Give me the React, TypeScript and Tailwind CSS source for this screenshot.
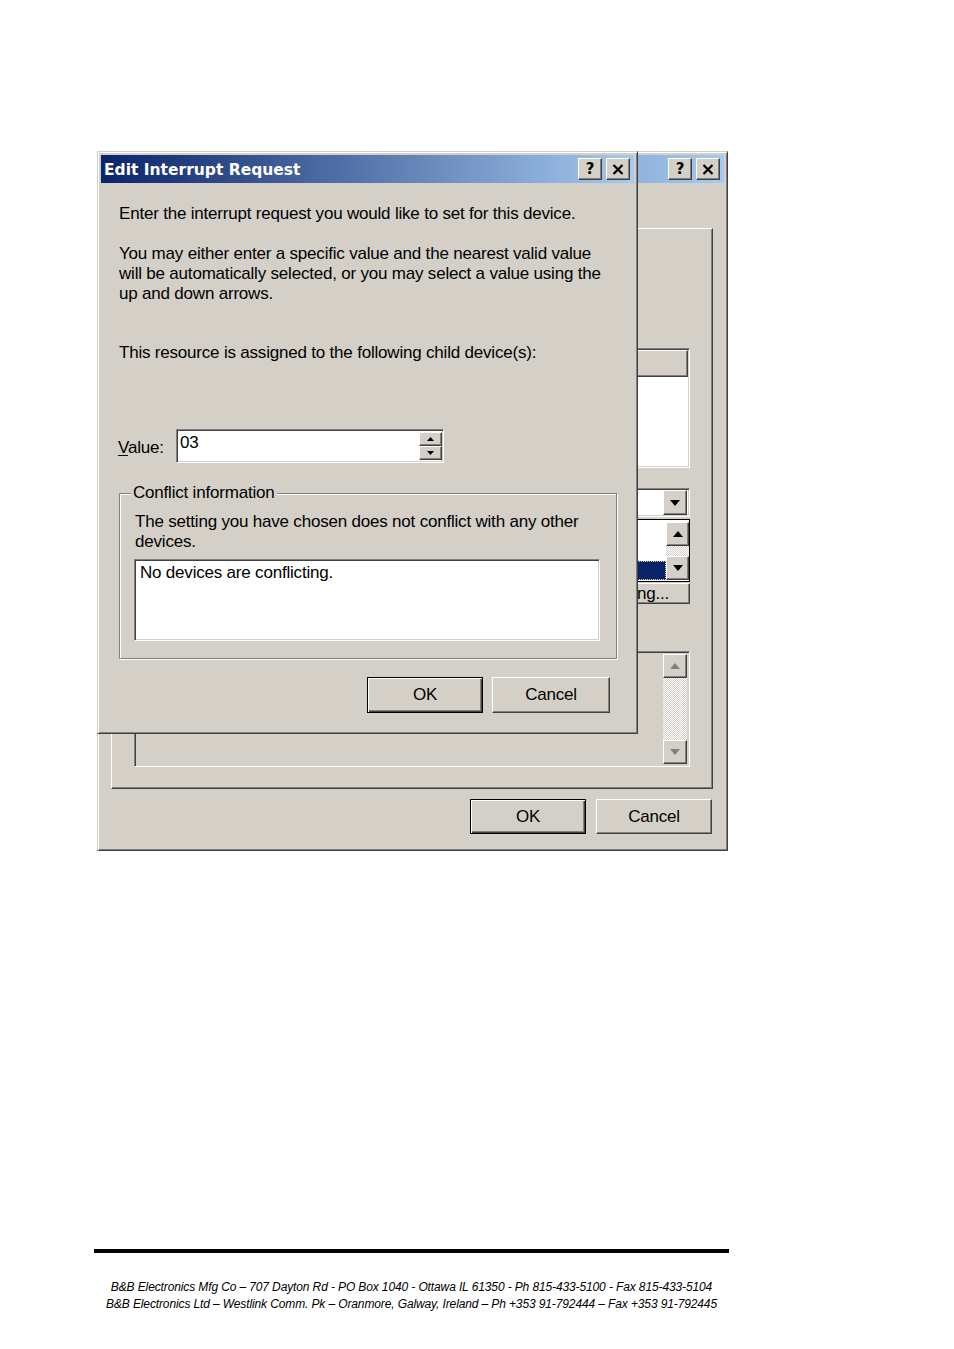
import React from 'react';

const ui = "font-['Liberation_Sans',Arial,sans-serif] tracking-[-0.2px]";
const raised =
  'bg-[#d4d0c8] border border-t-white border-l-white border-r-[#404040] border-b-[#404040] shadow-[inset_-1px_-1px_0_#808080]';
const sunken =
  'border border-t-[#808080] border-l-[#808080] border-r-white border-b-white shadow-[inset_1px_1px_0_#404040,inset_-1px_-1px_0_#d4d0c8]';
const windowBox =
  'bg-[#d4d0c8] border border-t-[#d4d0c8] border-l-[#d4d0c8] border-r-[#404040] border-b-[#404040] shadow-[inset_1px_1px_0_#fff,inset_-1px_-1px_0_#808080]';
const checker =
  'bg-[repeating-conic-gradient(#ffffff_0%_25%,#d4d0c8_0%_50%)] bg-[length:2px_2px]';

function Arrow({ dir, color = '#000', w = 10, h = 6 }: { dir: 'up' | 'down'; color?: string; w?: number; h?: number }) {
  return (
    <svg width={w} height={h} viewBox={`0 0 ${w} ${h}`}>
      {dir === 'down' ? (
        <polygon points={`0,0 ${w},0 ${w / 2},${h}`} fill={color} />
      ) : (
        <polygon points={`0,${h} ${w},${h} ${w / 2},0`} fill={color} />
      )}
    </svg>
  );
}

function TitleButtons() {
  return (
    <div className="flex gap-[4px]">
      <div className={`${raised} w-[24px] h-[22px] flex items-center justify-center`}>
        <span className="font-['DejaVu_Sans',sans-serif] font-bold text-[15px] leading-none text-black">?</span>
      </div>
      <div className={`${raised} w-[24px] h-[22px] flex items-center justify-center`}>
        <svg width="12" height="11" viewBox="0 0 12 11">
          <path d="M1.5 1 L10.5 10 M10.5 1 L1.5 10" stroke="#000" strokeWidth="2.2" />
        </svg>
      </div>
    </div>
  );
}

function Button({ label, primary, w }: { label: string; primary?: boolean; w: string }) {
  const cls = primary
    ? 'bg-[#d4d0c8] border border-black shadow-[inset_1px_1px_0_#fff,inset_-1px_-1px_0_#404040,inset_-2px_-2px_0_#808080]'
    : raised;
  return (
    <div className={`${cls} ${w} h-full flex items-center justify-center text-[17px] text-black`}>{label}</div>
  );
}

function ScrollBtn({ dir, disabled }: { dir: 'up' | 'down'; disabled?: boolean }) {
  return (
    <div className={`${raised} h-[24px] flex items-center justify-center`}>
      <Arrow dir={dir} color={disabled ? '#808080' : '#000'} w={10} h={6} />
    </div>
  );
}

function BackWindow() {
  return (
    <div className={`${windowBox} w-[631px] h-[700px] p-[3px] flex flex-col`}>
      <div className="h-[28px] flex items-center justify-end pr-[4px] bg-[linear-gradient(to_right,#0a246a,#a6caf0)]">
        <TitleButtons />
      </div>
      <div className="pl-[10px] pt-[45px]">
        <div className="w-[602px] h-[561px] border border-t-white border-l-white border-r-[#404040] border-b-[#404040] shadow-[inset_-1px_-1px_0_#808080] pl-[22px] pr-[22px] flex flex-col">
          {/* device list with header */}
          <div className={`${sunken} mt-[119px] h-[120px] bg-white flex flex-col`}>
            <div className={`${raised} h-[27px] mx-[1px] mt-[1px]`} />
          </div>
          {/* combo */}
          <div className={`${sunken} mt-[20px] h-[29px] bg-white flex justify-end items-center pr-[2px]`}>
            <div className={`${raised} w-[24px] h-[25px] flex items-center justify-center`}>
              <Arrow dir="down" w={10} h={6} />
            </div>
          </div>
          {/* list with selection */}
          <div className="mt-[2px] h-[63px] bg-white border border-black flex">
            <div className="flex-1 flex flex-col justify-end pb-[1px]">
              <div className="h-[19px] bg-[#0a246a] border border-dotted border-[#e8d890]" />
            </div>
            <div className="w-[23px] flex flex-col pt-[2px] pb-[1px]">
              <ScrollBtn dir="up" />
              <div className={`flex-1 ${checker}`} />
              <ScrollBtn dir="down" />
            </div>
          </div>
          <div className="mt-[1px] self-end w-[170px] h-[21px]">
            <div className={`${raised} h-full flex items-center justify-center ${ui} text-[17px] text-black leading-none`}>
              Change Setting...
            </div>
          </div>
          {/* conflict list of back window */}
          <div className={`${sunken} mt-[47px] h-[116px] bg-[#d4d0c8] flex justify-end p-[2px]`}>
            <div className="w-[24px] flex flex-col">
              <ScrollBtn dir="up" disabled />
              <div className={`flex-1 ${checker}`} />
              <ScrollBtn dir="down" disabled />
            </div>
          </div>
        </div>
      </div>
      <div className={`${ui} mt-[10px] h-[35px] flex justify-end gap-[10px] pr-[12px]`}>
        <Button label="OK" primary w="w-[116px]" />
        <Button label="Cancel" w="w-[116px]" />
      </div>
    </div>
  );
}

function FrontDialog() {
  return (
    <div className={`${windowBox} absolute left-0 top-0 w-[541px] h-[583px] p-[3px] flex flex-col`}>
      <div className="h-[28px] flex items-center pl-[3px] pr-[4px] bg-[linear-gradient(to_right,#0a246a,#a6caf0)]">
        <span className="flex-1 pt-[3px] font-['DejaVu_Sans',sans-serif] font-bold text-[15.5px] text-white leading-none">
          Edit Interrupt Request
        </span>
        <TitleButtons />
      </div>
      <div className={`${ui} text-[17px] leading-[20px] text-black pl-[18px] pr-[17px]`}>
        <p className="mt-[21px]">Enter the interrupt request you would like to set for this device.</p>
        <p className="mt-[20px]">
          You may either enter a specific value and the nearest valid value
          <br />
          will be automatically selected, or you may select a value using the
          <br />
          up and down arrows.
        </p>
        <p className="mt-[39px]">This resource is assigned to the following child device(s):</p>
        <div className="mt-[66px] h-[34px] flex items-center">
          <span className="w-[58px] -ml-[1px] pt-[3px]">
            <span className="underline underline-offset-2">V</span>alue:
          </span>
          <div className={`${sunken} w-[268px] h-full bg-white flex`}>
            <span className="flex-1 pl-[3px] pt-[3px]">03</span>
            <div className="w-[24px] flex flex-col py-[2px] pr-[1px]">
              <div className={`${raised} flex-1 flex items-center justify-center`}>
                <Arrow dir="up" w={7} h={4} />
              </div>
              <div className={`${raised} flex-1 flex items-center justify-center`}>
                <Arrow dir="down" w={7} h={4} />
              </div>
            </div>
          </div>
        </div>
        <fieldset className="mt-[20px] w-[498px] border border-[#808080] shadow-[inset_1px_1px_0_#fff,1px_1px_0_#fff] pl-[14px] pb-[17px]">
          <legend className="-ml-[3px] px-[2px] bg-[#d4d0c8]">Conflict information</legend>
          <p className="mt-[9px] pl-[1px]">
            The setting you have chosen does not conflict with any other
            <br />
            devices.
          </p>
          <div className={`${sunken} mt-[7px] w-[466px] h-[82px] bg-white pl-[5px] pt-[3px]`}>
            No devices are conflicting.
          </div>
        </fieldset>
        <div className="mt-[18px] h-[36px] w-[498px] flex justify-end gap-[9px] pr-[7px]">
          <Button label="OK" primary w="w-[116px]" />
          <Button label="Cancel" w="w-[118px]" />
        </div>
      </div>
    </div>
  );
}

export default function App() {
  return (
    <div className="w-[954px] h-[1349px] bg-white overflow-hidden">
      <div className="relative ml-[97px] mt-[151px] w-[631px] h-[700px]">
        <BackWindow />
        <FrontDialog />
      </div>
      <div className="ml-[94px] mt-[398px] w-[635px] h-[4px] bg-black" />
      <div className="ml-[94px] mt-[26px] w-[635px] text-center whitespace-nowrap font-['Liberation_Sans',Arial,sans-serif] italic text-[12px] tracking-[-0.12px] leading-[17px] text-black">
        <p>B&amp;B Electronics Mfg Co – 707 Dayton Rd - PO Box 1040 - Ottawa IL 61350 - Ph 815-433-5100 - Fax 815-433-5104</p>
        <p>B&amp;B Electronics Ltd – Westlink Comm. Pk – Oranmore, Galway, Ireland – Ph +353 91-792444 – Fax +353 91-792445</p>
      </div>
    </div>
  );
}
